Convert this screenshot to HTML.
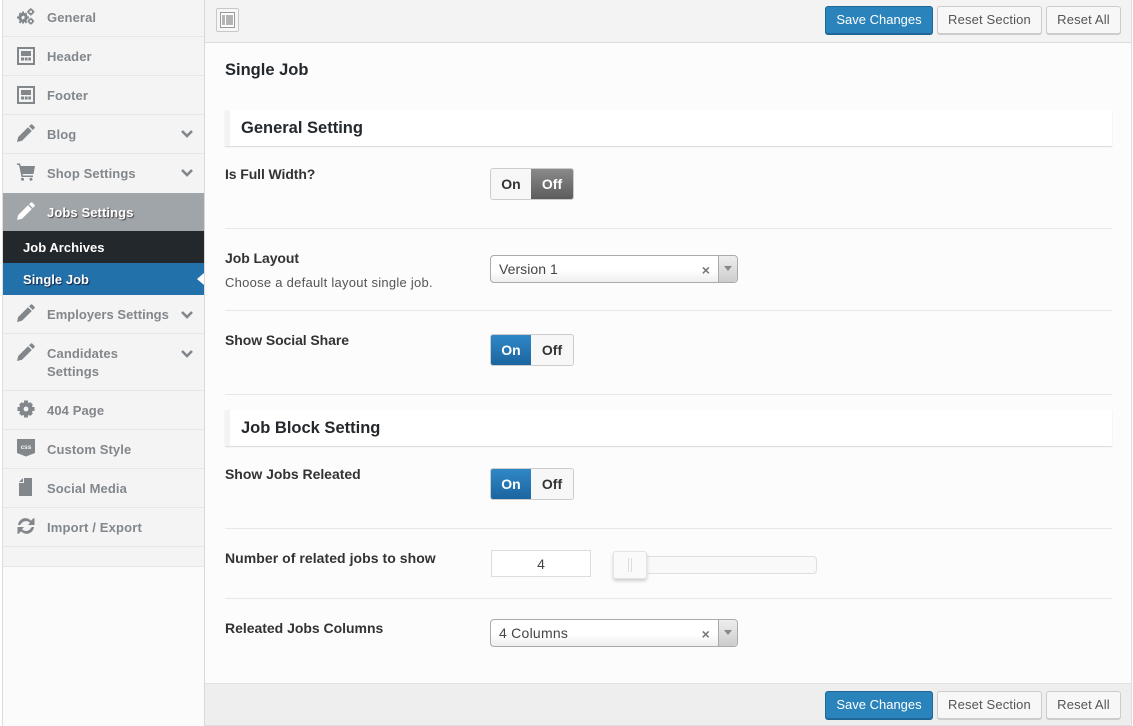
<!DOCTYPE html>
<html><head><meta charset="utf-8"><style>
*{box-sizing:border-box}
html,body{margin:0;padding:0;width:1133px;height:726px;overflow:hidden;background:#fff}
body{position:relative;font-family:"Liberation Sans",sans-serif;-webkit-font-smoothing:antialiased}
.a{position:absolute}
.t{position:absolute;white-space:nowrap}
.nav{font-size:13px;font-weight:bold;color:#82878c;left:47px;letter-spacing:.1px;line-height:18px}
.line{position:absolute;height:1px;background:#e7e7e7}
.lb{font-size:14px;font-weight:bold;color:#333;left:225px;line-height:18px;letter-spacing:.03px}
.btn{position:absolute;height:28px;border:1px solid #ccc;border-radius:3px;background:#f7f7f7;box-shadow:0 1px 0 #ccc;color:#555;font-size:13px;line-height:26px;text-align:center;letter-spacing:.15px}
.btn.p{background:#2a83ba;border-color:#20689a;box-shadow:0 1px 0 #1b6494;color:#fff;letter-spacing:0}
.sw{position:absolute;left:490px;width:84px;height:32px;border:1px solid #ccc;border-radius:3px;background:#f7f7f7;overflow:hidden;font-size:14px;font-weight:bold;color:#333;line-height:30px}
.sw span{position:absolute;top:0;height:30px;text-align:center}
.sw .l{left:0;width:40px}.sw .r{left:40px;width:42px}
.sw .blue{background:linear-gradient(#3088c7,#1b659f);color:#fff}
.sw .gray{background:linear-gradient(#8a8a8a,#5c5c5c);color:#fff}
.hd{position:absolute;left:225px;width:887px;height:36px;background:#fff;border-left:5px solid #f3f3f3;box-shadow:0 1px 1px #d8d8d8;font-size:16.5px;font-weight:bold;color:#23282d;padding-left:11px;line-height:36px}
.sel{position:absolute;left:490px;width:248px;height:28px;border:1px solid #aaa;border-radius:4px;background:linear-gradient(#fff 55%,#eee);font-size:14px;color:#444;line-height:26px;padding-left:8px;letter-spacing:.05px}
.sel i{position:absolute;right:0;top:0;width:19px;height:26px;border-left:1px solid #aaa;background:linear-gradient(#eee,#ccc);border-radius:0 4px 4px 0}
.sel i:after{content:"";position:absolute;left:5px;top:10px;border:4px solid transparent;border-top:5px solid #888;border-bottom:0}
.sel b{position:absolute;right:27px;top:1px;font-size:14px;color:#777;font-weight:bold}
svg{position:absolute;fill:#82878c}
</style></head><body>

<!-- sidebar -->
<div class="a" style="left:3px;top:0;width:202px;height:726px;background:#f4f4f4;border-right:1px solid #d8d8d8"></div>
<div class="a" style="left:0;top:0;width:3px;height:726px;background:#fff;border-right:1px solid #ddd"></div>
<div class="a" style="left:3px;top:567px;width:201px;height:159px;background:#fbfbfb"></div>

<div class="line" style="left:3px;top:36px;width:201px"></div>
<div class="line" style="left:3px;top:75px;width:201px"></div>
<div class="line" style="left:3px;top:114px;width:201px"></div>
<div class="line" style="left:3px;top:153px;width:201px"></div>
<div class="line" style="left:3px;top:333px;width:201px"></div>
<div class="line" style="left:3px;top:390px;width:201px"></div>
<div class="line" style="left:3px;top:429px;width:201px"></div>
<div class="line" style="left:3px;top:468px;width:201px"></div>
<div class="line" style="left:3px;top:507px;width:201px"></div>
<div class="line" style="left:3px;top:546px;width:201px"></div>
<div class="line" style="left:3px;top:566px;width:201px"></div>

<div class="a" style="left:3px;top:193px;width:201px;height:38px;background:#a0a5aa"></div>
<div class="a" style="left:3px;top:231px;width:201px;height:32px;background:#23282d"></div>
<div class="a" style="left:3px;top:263px;width:201px;height:32px;background:#2271ab"></div>
<div class="a" style="left:197px;top:273px;border:6px solid transparent;border-right:7px solid #fff;border-left:0"></div>

<div class="t nav" style="top:9px">General</div>
<div class="t nav" style="top:48px">Header</div>
<div class="t nav" style="top:87px">Footer</div>
<div class="t nav" style="top:126px">Blog</div>
<div class="t nav" style="top:165px">Shop Settings</div>
<div class="t nav" style="top:204px;color:#fff;text-shadow:1px 1px 1px #444">Jobs Settings</div>
<div class="t nav" style="top:239px;left:23px;color:#fff;letter-spacing:.03px">Job Archives</div>
<div class="t nav" style="top:271px;left:23px;color:#fff;text-shadow:1px 1px 1px #124;letter-spacing:.03px">Single Job</div>
<div class="t nav" style="top:306px;letter-spacing:.03px">Employers Settings</div>
<div class="t nav" style="top:345px">Candidates</div>
<div class="t nav" style="top:363px">Settings</div>
<div class="t nav" style="top:402px">404 Page</div>
<div class="t nav" style="top:441px">Custom Style</div>
<div class="t nav" style="top:480px">Social Media</div>
<div class="t nav" style="top:519px;letter-spacing:.17px">Import / Export</div>

<!-- icons -->
<svg style="left:17px;top:8px" width="18" height="17" viewBox="0 0 18 17"><g><circle cx="6" cy="9.500" r="3.500" fill="none" stroke="#82878c" stroke-width="2.400"/><path d="M5 3.500h2v12H5zM0 8.500h12v2H0zM1.800 5.800l1.400-1.400 7 9.800-1.400 1.400zM10.200 5.800L8.800 4.400l-7 9.800 1.400 1.400z"/><circle cx="6" cy="9.500" r="1.500" fill="#f4f4f4"/></g><circle cx="13.800" cy="3.800" r="2.300" fill="none" stroke="#82878c" stroke-width="1.600"/><path d="M13.200 0h1.200v7.600h-1.200zM10 3.200h7.600v1.200H10z"/><circle cx="13.800" cy="3.800" r="1.100" fill="#f4f4f4"/><circle cx="13.800" cy="13.200" r="2.100" fill="none" stroke="#82878c" stroke-width="1.500"/><path d="M13.200 9.800h1.200v6.800h-1.200zM10.400 12.600h6.800v1.200h-6.800z"/><circle cx="13.800" cy="13.200" r="1" fill="#f4f4f4"/></svg>
<svg style="left:17px;top:47px" width="18" height="18" viewBox="0 0 18 18"><path fill-rule="evenodd" d="M0 0h18v18H0zM2 2v14h14V2z"/><path d="M4 4h10v5H4zM4 10.500h3v3H4zM7.800 10.500h2.800v3H7.800zM11.300 10.500H14v3h-2.700z"/></svg>
<svg style="left:17px;top:86px" width="18" height="18" viewBox="0 0 18 18"><path fill-rule="evenodd" d="M0 0h18v18H0zM2 2v14h14V2z"/><path d="M4 4h10v5H4zM4 10.500h3v3H4zM7.800 10.500h2.800v3H7.800zM11.300 10.500H14v3h-2.700z"/></svg>
<svg style="left:17px;top:124px" width="18" height="18" viewBox="0 0 18 18"><path d="M0 18l1.200-5L11 3.200l3.800 3.800L5 16.800zM12 2.200L13.800.6q.8-.6 1.500 0l2.200 2.200q.6.700 0 1.500L15.800 6z"/></svg>
<svg style="left:17px;top:163px" width="18" height="18" viewBox="0 0 18 18"><path d="M0 .5h3l.8 2.500H18l-1.500 8H5.500l.4 1.500H16v1.500H4.500L2 2H0z"/><circle cx="5.500" cy="16.300" r="1.500"/><circle cx="14" cy="16.300" r="1.500"/></svg>
<svg style="left:17px;top:202px;fill:#fff" width="18" height="18" viewBox="0 0 18 18"><path d="M0 18l1.200-5L11 3.200l3.800 3.800L5 16.800zM12 2.200L13.800.6q.8-.6 1.500 0l2.200 2.200q.6.700 0 1.500L15.800 6z"/></svg>
<svg style="left:17px;top:304px" width="18" height="18" viewBox="0 0 18 18"><path d="M0 18l1.200-5L11 3.200l3.800 3.800L5 16.800zM12 2.200L13.800.6q.8-.6 1.500 0l2.200 2.200q.6.700 0 1.500L15.800 6z"/></svg>
<svg style="left:17px;top:343px" width="18" height="18" viewBox="0 0 18 18"><path d="M0 18l1.200-5L11 3.200l3.800 3.800L5 16.800zM12 2.200L13.800.6q.8-.6 1.500 0l2.200 2.200q.6.700 0 1.500L15.800 6z"/></svg>
<svg style="left:17px;top:400px" width="18" height="18" viewBox="0 0 18 18"><circle cx="9" cy="9" r="5" fill="none" stroke="#82878c" stroke-width="3.400"/><path d="M7 .5h4v17H7zM.5 7h17v4H.5z"/><path d="M2 4.800L4.800 2l11.200 11.200-2.800 2.800zM16 4.800L13.200 2 2 13.200 4.800 16z"/><circle cx="9" cy="9" r="2.400" fill="#f4f4f4"/></svg>
<svg style="left:17px;top:439px" width="18" height="18" viewBox="0 0 18 18"><path d="M0 0h18v14l-9 3.500L0 14z"/><text x="9" y="10" text-anchor="middle" font-size="6.500" font-weight="bold" fill="#f4f4f4" font-family="Liberation Sans">css</text></svg>
<svg style="left:19px;top:478px" width="14" height="18" viewBox="0 0 14 18"><path d="M5 0h8v18H0V5h5zM0 4l4-4v4z"/></svg>
<svg style="left:17px;top:517px" width="18" height="18" viewBox="0 0 18 18"><path d="M1 8C1.500 3.500 6 0 10.500 1.500c1.500.5 2.500 1.200 3.500 2.200L16 1.500 17.500 1v7h-6.500l2-2.200C11 3.500 7 3.500 5 5.800 4 7 3.500 7.500 3.200 8zM17 10c-.5 4.500-5 8-9.500 6.500C6 16 5 15.300 4 14.300L2 16.500.5 17v-7H7l-2 2.200c2 2.300 6 2.300 8 0 1-1.200 1.500-1.700 1.800-2.200z"/></svg>
<svg style="left:181px;top:130px;fill:none;stroke:#82878c;stroke-width:2.600" width="12" height="8" viewBox="0 0 12 8"><path d="M1 1l5 5 5-5"/></svg>
<svg style="left:181px;top:169px;fill:none;stroke:#82878c;stroke-width:2.600" width="12" height="8" viewBox="0 0 12 8"><path d="M1 1l5 5 5-5"/></svg>
<svg style="left:181px;top:311px;fill:none;stroke:#82878c;stroke-width:2.600" width="12" height="8" viewBox="0 0 12 8"><path d="M1 1l5 5 5-5"/></svg>
<svg style="left:181px;top:350px;fill:none;stroke:#82878c;stroke-width:2.600" width="12" height="8" viewBox="0 0 12 8"><path d="M1 1l5 5 5-5"/></svg>

<!-- main -->
<div class="a" style="left:205px;top:0;width:927px;height:726px;background:#fcfcfc;border-right:1px solid #ddd"></div>
<div class="a" style="left:205px;top:0;width:926px;height:43px;background:#f3f3f3;border-bottom:1px solid #dcdcdc"></div>
<div class="a" style="left:205px;top:683px;width:926px;height:43px;background:#eee;border-top:1px solid #e2e2e2;border-bottom:1px solid #ddd"></div>

<div class="a" style="left:216px;top:8px;width:23px;height:24px;border:1px solid #c8c8c8;border-radius:2px;background:#f6f6f6"></div>
<div class="a" style="left:220px;top:12px;width:15px;height:16px;border:1px solid #999;background:#fff"></div>
<div class="a" style="left:222px;top:15px;width:3px;height:10px;background:#b4b4b4"></div>
<div class="a" style="left:226px;top:15px;width:7px;height:10px;background:#b4b4b4"></div>

<div class="btn p" style="left:825px;top:6px;width:108px">Save Changes</div>
<div class="btn" style="left:937px;top:6px;width:105px">Reset Section</div>
<div class="btn" style="left:1046px;top:6px;width:75px">Reset All</div>
<div class="btn p" style="left:825px;top:691px;width:108px">Save Changes</div>
<div class="btn" style="left:937px;top:691px;width:105px">Reset Section</div>
<div class="btn" style="left:1046px;top:691px;width:75px">Reset All</div>

<div class="t" style="left:225px;top:59px;font-size:16.500px;font-weight:bold;color:#23282d;line-height:20px;padding-top:1px">Single Job</div>

<div class="hd" style="top:110px">General Setting</div>
<div class="t lb" style="top:165px;letter-spacing:-.1px">Is Full Width?</div>
<div class="sw" style="top:168px"><span class="l">On</span><span class="r gray">Off</span></div>
<div class="line" style="left:225px;top:228px;width:887px"></div>

<div class="t lb" style="top:249px;letter-spacing:-.07px">Job Layout</div>
<div class="t" style="left:225px;top:274px;font-size:13px;color:#555;line-height:18px;letter-spacing:.26px">Choose a default layout single job.</div>
<div class="sel" style="top:255px">Version 1<b>×</b><i></i></div>
<div class="line" style="left:225px;top:310px;width:887px"></div>

<div class="t lb" style="top:331px;letter-spacing:-.08px">Show Social Share</div>
<div class="sw" style="top:334px"><span class="l blue">On</span><span class="r">Off</span></div>
<div class="line" style="left:225px;top:394px;width:887px"></div>

<div class="hd" style="top:410px">Job Block Setting</div>
<div class="t lb" style="top:465px;letter-spacing:-.03px">Show Jobs Releated</div>
<div class="sw" style="top:468px"><span class="l blue">On</span><span class="r">Off</span></div>
<div class="line" style="left:225px;top:528px;width:887px"></div>

<div class="t lb" style="top:549px;letter-spacing:.05px">Number of related jobs to show</div>
<div class="a" style="left:491px;top:550px;width:100px;height:27px;background:#fff;border:1px solid #ddd;text-align:center;font-size:14px;color:#444;line-height:26px">4</div>
<div class="a" style="left:620px;top:556px;width:197px;height:18px;background:#f9f9f9;border:1px solid #dfdfdf;border-radius:4px"></div>
<div class="a" style="left:613px;top:551px;width:34px;height:28px;background:#fafafa;border:1px solid #e4e4e4;border-radius:3px;box-shadow:0 2px 3px #ccc"></div>
<div class="a" style="left:628px;top:558px;width:4px;height:14px;border-left:1px solid #ddd;border-right:1px solid #ddd"></div>
<div class="line" style="left:225px;top:598px;width:887px"></div>

<div class="t lb" style="top:619px;letter-spacing:-.02px">Releated Jobs Columns</div>
<div class="sel" style="top:619px;letter-spacing:.25px">4 Columns<b>×</b><i></i></div>

</body></html>
